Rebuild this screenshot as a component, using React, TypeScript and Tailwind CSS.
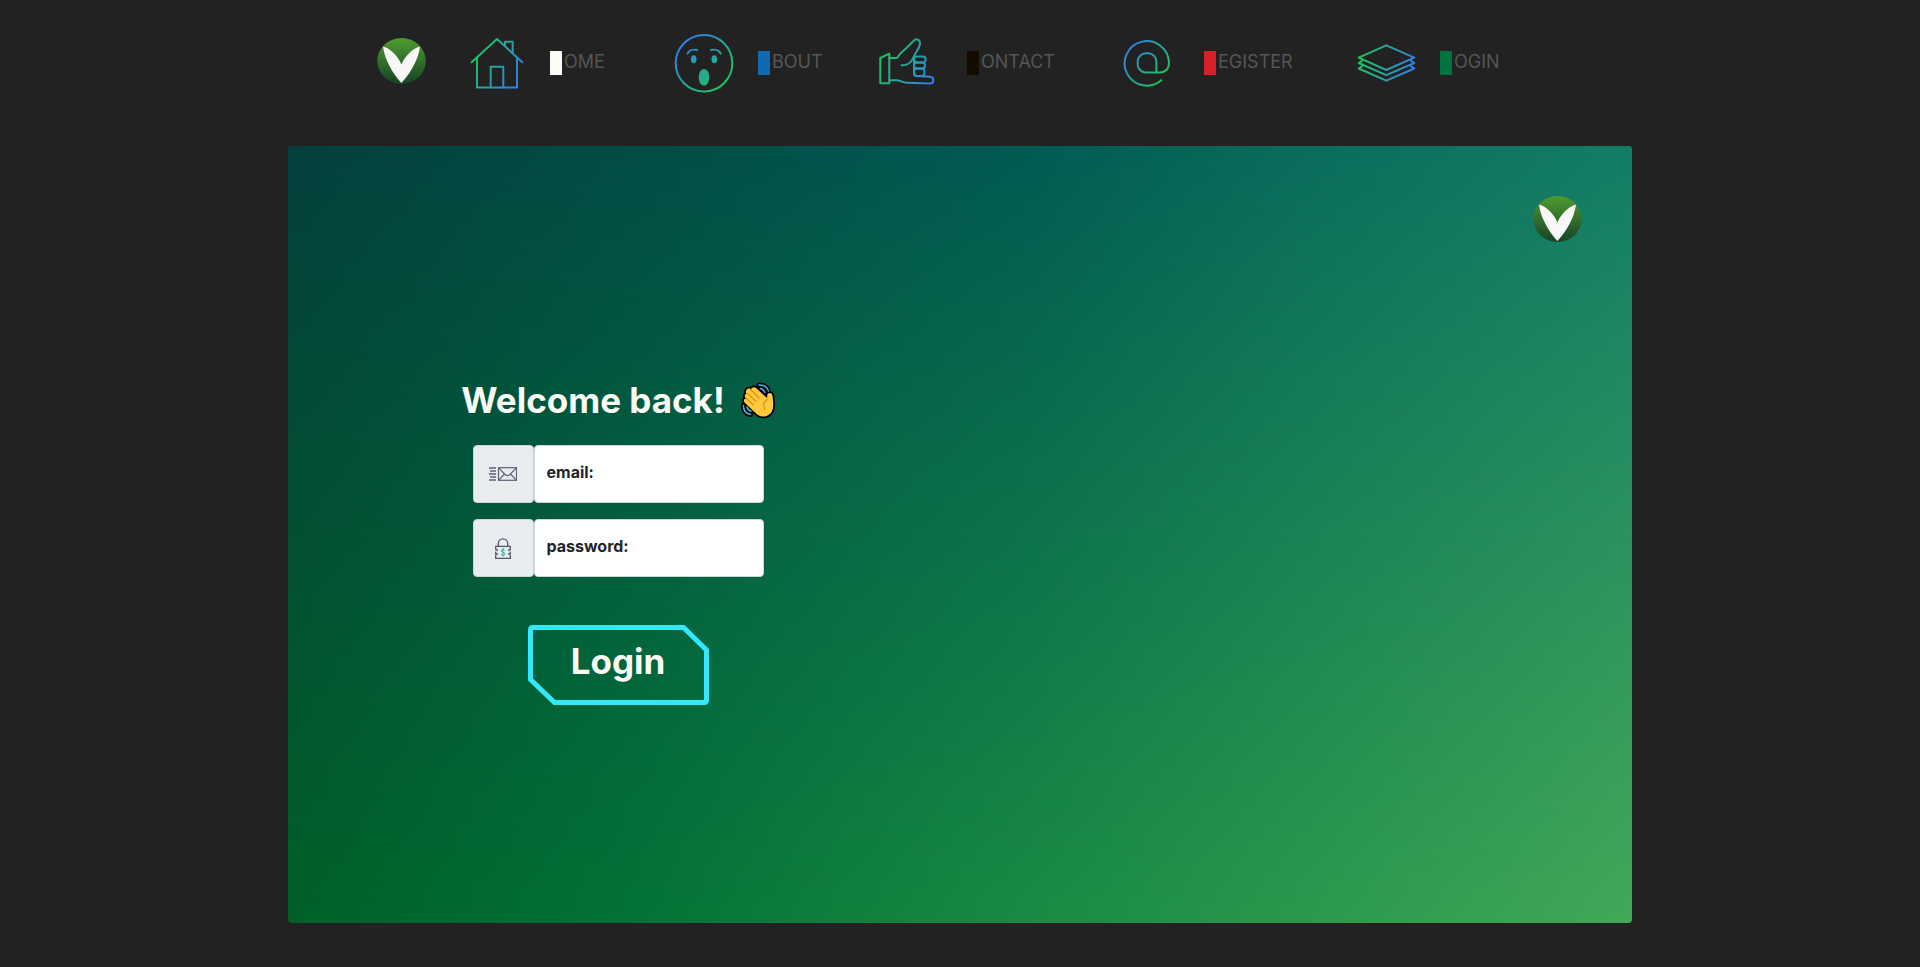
import React from "react";

function Logo({ id }: { id: string }) {
  return (
    <svg width="49" height="46" viewBox="0 0 49 46" role="img" aria-hidden="true">
      <defs>
        <linearGradient id={id} x1="0" y1="0" x2="0" y2="1">
          <stop offset="0" stopColor="#4f9c30" />
          <stop offset="1" stopColor="#174227" />
        </linearGradient>
      </defs>
      <ellipse cx="24.5" cy="23" rx="24.3" ry="23" fill={`url(#${id})`} />
      <path d="M6 8.6C14 11 21 18 24.4 26.6C28 18 35 11 43 8.6C41.500 21 34 35 24.4 45C15 35 7.500 21 6 8.6Z" fill="#f7f7f7" />
    </svg>
  );
}

type IconProps = { id: string; from: string; to: string; coords: number[]; children: React.ReactNode };

function NavIcon({ id, from, to, coords, children }: IconProps) {
  return (
    <svg
      className="shrink-0"
      width="72"
      height="60"
      viewBox="0 0 72 60"
      fill="none"
      stroke={`url(#${id})`}
      strokeWidth="2"
      strokeLinejoin="round"
      strokeLinecap="round"
      aria-hidden="true"
    >
      <defs>
        <linearGradient id={id} gradientUnits="userSpaceOnUse" x1={coords[0]} y1={coords[1]} x2={coords[2]} y2={coords[3]}>
          <stop offset="0" stopColor={from} />
          <stop offset="1" stopColor={to} />
        </linearGradient>
      </defs>
      {children}
    </svg>
  );
}

const GREEN = "#1fc45a";
const BLUE = "#2f80e4";

const links = [
  {
    text: "OME",
    block: "bg-[#fbfcf6]",
    width: "w-[208px]",
    icon: (
      <NavIcon id="home" from={GREEN} to={BLUE} coords={[14, 20, 58, 46]}>
        <path d="M11.700 29.300L37 6L62.300 29.300" />
        <path d="M17 25V54.600H57V25" />
        <path d="M30.700 54.600V33.700H43.300V54.600" />
        <path d="M45 13V8.700H52.700V20" />
      </NavIcon>
    ),
  },
  {
    text: "BOUT",
    block: "bg-[#106ab2]",
    width: "w-[209px]",
    icon: (
      <NavIcon id="about" from={BLUE} to={GREEN} coords={[14, 12, 56, 52]}>
        <circle cx="36" cy="30.300" r="28.300" />
        <path d="M19.500 20.500C21 17.500 25 16 29.200 17" />
        <path d="M43 17C47 16 51 17.500 52.700 20.500" />
        <g fill="url(#about)" stroke="none">
          <ellipse cx="25.700" cy="26.300" rx="2.800" ry="4" />
          <ellipse cx="46.300" cy="26.300" rx="2.800" ry="4" />
          <ellipse cx="36" cy="44.300" rx="5.300" ry="8.400" />
        </g>
      </NavIcon>
    ),
  },
  {
    text: "ONTACT",
    block: "bg-[#140a00]",
    width: "w-[237px]",
    icon: (
      <NavIcon id="contact" from={GREEN} to={BLUE} coords={[3, 22, 55, 50]}>
        <path d="M3.300 25L12.300 20.700V50.300H3.300Z" />
        <path d="M12.300 25H20C23 20 26 18 29 15.500L36.500 8C39 5 43.500 6.500 43 11C42.500 14.500 40.500 17 39 19.500C37 23 36 26 34 28.500C31.500 31.500 28 32.300 24.500 32.300" />
        <rect x="37" y="23.500" width="11.700" height="6" rx="3" />
        <rect x="37" y="29.500" width="11" height="6" rx="3" />
        <rect x="37" y="35.500" width="10.500" height="7.500" rx="3" />
        <path d="M37 26V40C37 42 38 43 40 43L53 43.700C57.500 44 57.500 50.400 53 50.400L29.700 49.700C26 49.600 23.500 47.300 19 47.300H12.300" />
      </NavIcon>
    ),
  },
  {
    text: "EGISTER",
    block: "bg-[#d8202c]",
    width: "w-[236px]",
    icon: (
      <NavIcon id="register" from={BLUE} to={GREEN} coords={[14, 14, 50, 46]}>
        <path d="M47.300 47.200A22.200 22.200 0 1 1 55 30C55 36 51 39.400 46 39.400H31.500A8 8 0 0 1 23.700 31.500V28.500A8.200 8.200 0 0 1 32 20.300H34A8.400 8.400 0 0 1 42.400 28.700V39.400" />
      </NavIcon>
    ),
  },
  {
    text: "OGIN",
    block: "bg-[#00743f]",
    width: "w-[193px]",
    icon: (
      <NavIcon id="login" from={GREEN} to={BLUE} coords={[9, 24, 64, 32]}>
        <path d="M8.700 24.700L36.300 12.300L64.300 24.700L36.300 37Z" />
        <path d="M12 27.800L8.700 30L36.300 42.200L64.300 30L61 27.800" />
        <path d="M12 33.300L8.700 35.500L36.300 47.700L64.300 35.500L61 33.300" />
      </NavIcon>
    ),
  },
];

const HAND =
  "M5.500 8C7 5.500 9 6.500 10 7.500C10.500 5 13.500 4.500 15 6L26 16C26.500 14 26 12.500 27 11.500C29 10 31.500 11.500 31.500 14C32 18 32.500 22 32 26C31 32 26 35 21 34.500C18 34 16 32.500 14 30.500L4 21C2 19 3 16.500 5 16.500C3 14.500 3.500 12.500 5.500 12C4.500 10.500 4.500 9.500 5.500 8Z";

function WavingHand() {
  return (
    <svg width="34" height="37" viewBox="0 0 34 37" fill="none" strokeLinecap="round" strokeLinejoin="round" aria-hidden="true">
      <g stroke="#000" strokeWidth="5">
        <path d="M18 3C23 2.500 27 6 27.500 11" />
        <path d="M18.500 6.500C21.500 7 23.500 9 24 11.500" />
        <path d="M2.500 23C2 28 5 32 9.500 32.500" />
        <path d="M6 23.500C6.500 27 8 28.500 11 29" />
      </g>
      <path d={HAND} fill="#ffc83d" stroke="#000" strokeWidth="3.600" />
      <path d={HAND} fill="#ffc83d" />
      <g stroke="#d99314" strokeWidth="1.200">
        <path d="M10 8L18 16" />
        <path d="M6.500 11.500L15 19.500" />
        <path d="M5.500 16.500L12.500 23" />
        <path d="M26.500 17.500C22.500 20 22 24 24 27.500" />
      </g>
      <g stroke="#50b9e8" strokeWidth="1.500">
        <path d="M18 3C23 2.500 27 6 27.500 9" />
        <path d="M19.500 6.500C21.500 7 23 8.500 24 10.500" />
        <path d="M2.500 23.500C2 28 5 32 9.500 32.500" />
        <path d="M6 25C6.500 27 8 28.500 10 29" />
      </g>
    </svg>
  );
}

function MailIcon() {
  return (
    <svg width="28" height="14" viewBox="0 0 28 14" fill="none" stroke="#5f6079" strokeWidth="1.200" aria-hidden="true">
      <path d="M0 1H7M1 4H7M0 7H7M1 10H7M0 13H7" strokeWidth="1.400" />
      <rect x="9.500" y="0.700" width="18" height="12.600" />
      <path d="M9.500 0.700L16 7.500Q18.500 9.700 21 7.500L27.500 0.700M9.500 13.300L15.500 7M27.500 13.300L21.500 7" />
    </svg>
  );
}

function LockIcon() {
  return (
    <svg width="16" height="21" viewBox="0 0 16 21" fill="none" stroke="#55566d" strokeWidth="1.300" aria-hidden="true">
      <path d="M3.300 8V5.500A4.700 4.700 0 0 1 12.700 5.500V8" />
      <path d="M0.700 12V8.300H15.300V12M0.700 13.500V16M15.300 13.500V16M0.700 16.500V20.300H15.300V16.500" />
      <path d="M0.700 12H3M0.700 16H3M15.300 12H13M15.300 16H13" />
      <path
        d="M10 12.500C9.500 11 6.200 11 6.200 12.800C6.200 14.600 10 14 10 15.800C10 17.600 6.500 17.600 6 16.200M8 10V18.700"
        stroke="#27b99a"
        strokeWidth="1"
      />
    </svg>
  );
}

const fields = [
  { id: "email", type: "email", placeholder: "email:", icon: <MailIcon /> },
  { id: "password", type: "password", placeholder: "password:", icon: <LockIcon /> },
];

export default function App() {
  return (
    <div className="flex min-h-screen flex-col bg-[#222222] font-[Inter,'Noto_Sans',sans-serif]">
      <header className="mb-5 flex h-[126px] items-center justify-center">
        <a href="#" aria-label="Logo" className="mr-[34px] pb-1">
          <Logo id="logo-nav" />
        </a>
        <nav className="flex items-center">
          {links.map((link) => (
            <a key={link.text} href="#" className={`flex items-center ${link.width}`}>
              {link.icon}
              <span className={`mr-0.5 ml-[18px] h-6 w-3 shrink-0 ${link.block}`} />
              <span className="pb-0.5 text-lg leading-6 text-[#555555]">{link.text}</span>
            </a>
          ))}
        </nav>
      </header>

      <main className="relative isolate mx-auto mb-11 grid w-[70%] flex-1 grid-cols-2 overflow-hidden rounded bg-[linear-gradient(to_right,#006028_0%,#047236_25%,#168742_50%,#2a994d_75%,#44a858_100%)] before:absolute before:inset-0 before:-z-10 before:bg-[linear-gradient(to_right,#043f3d_0%,#014c45_25%,#015a52_55%,#0a6b5c_75%,#137c66_100%)] before:[mask-image:linear-gradient(to_bottom,black,transparent)]">
        <form className="flex flex-col items-center pt-[232px] pr-3" onSubmit={(e) => e.preventDefault()}>
          <h1 className="flex items-center gap-4 text-[35px] leading-[44px] font-bold whitespace-nowrap text-[#fbfcf6]">
            Welcome back!
            <WavingHand />
          </h1>
          <div className="mt-[23px] flex flex-col gap-4">
            {fields.map((f) => (
              <div key={f.id} className="flex h-[58px] w-[291px]">
                <label
                  htmlFor={f.id}
                  className="flex w-[61px] shrink-0 items-center justify-center rounded border border-[#ced4da] bg-[#e9ecef]"
                >
                  {f.icon}
                </label>
                <input
                  id={f.id}
                  type={f.type}
                  aria-label={f.placeholder}
                  placeholder={f.placeholder}
                  className="min-w-0 flex-1 rounded border border-[#ced4da] bg-white px-3 pb-1 text-base font-bold text-[#212529] placeholder:text-[#212529] placeholder:opacity-100"
                />
              </div>
            ))}
          </div>
          <button
            type="submit"
            className="relative mt-12 flex h-20 w-[181px] items-center justify-center pb-2 text-[35px] font-bold text-[#fbfcf6]"
          >
            <svg className="absolute inset-0" width="181" height="80" viewBox="0 0 181 80" fill="none" stroke="#33e7fd" strokeWidth="5" aria-hidden="true">
              <path d="M5 2.500H155.500L178.500 25V75Q178.500 77.500 176 77.500H26.500L2.500 54.500V5Q2.500 2.500 5 2.500Z" />
            </svg>
            Login
          </button>
        </form>
        <div className="flex items-start justify-end pt-[50px] pr-[50px]">
          <Logo id="logo-card" />
        </div>
      </main>
    </div>
  );
}
